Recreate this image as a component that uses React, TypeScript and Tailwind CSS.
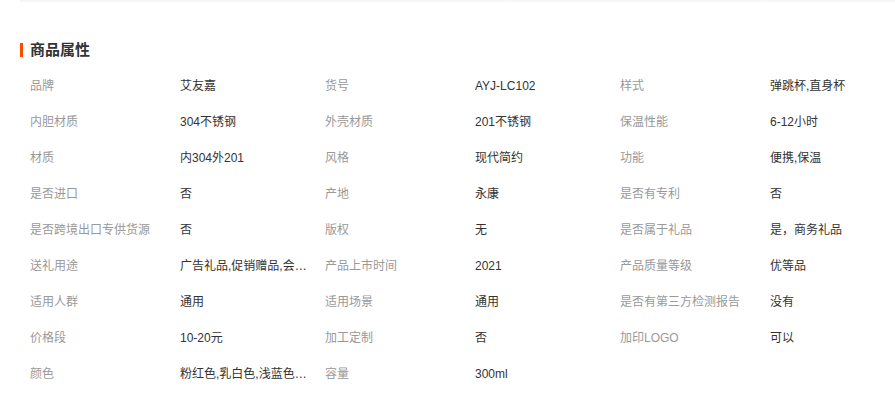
const attrs: [string, string][] = [
  ["品牌", "艾友嘉"],
  ["货号", "AYJ-LC102"],
  ["样式", "弹跳杯,直身杯"],
  ["内胆材质", "304不锈钢"],
  ["外壳材质", "201不锈钢"],
  ["保温性能", "6-12小时"],
  ["材质", "内304外201"],
  ["风格", "现代简约"],
  ["功能", "便携,保温"],
  ["是否进口", "否"],
  ["产地", "永康"],
  ["是否有专利", "否"],
  ["是否跨境出口专供货源", "否"],
  ["版权", "无"],
  ["是否属于礼品", "是，商务礼品"],
  ["送礼用途", "广告礼品,促销赠品,会议礼品"],
  ["产品上市时间", "2021"],
  ["产品质量等级", "优等品"],
  ["适用人群", "通用"],
  ["适用场景", "通用"],
  ["是否有第三方检测报告", "没有"],
  ["价格段", "10-20元"],
  ["加工定制", "否"],
  ["加印LOGO", "可以"],
  ["颜色", "粉红色,乳白色,浅蓝色,黑色"],
  ["容量", "300ml"],
];

export default function App() {
  return (
    <div
      className="w-[895px] h-[399px] bg-white overflow-hidden text-[#333]"
      style={{ fontFamily: '"Liberation Sans", "Noto Sans CJK SC", sans-serif' }}
    >
      {/* shadow of the block above */}
      <div className="ml-[20px] h-[3px] bg-gradient-to-b from-[#f2f3f7] to-white" />

      <div className="pl-[20px] pt-[37px]">
        <div className="flex items-center h-[20px]">
          <span className="w-[3px] h-[14px] bg-[#ff4a00]" />
          <h3 className="ml-[7px] text-[15px] font-bold leading-[20px]">商品属性</h3>
        </div>

        <div className="pl-[10px] pt-[8px] grid grid-cols-[150px_145px_150px_145px_150px_125px]">
          {attrs.map(([label, value]) => (
            <Cell key={label} label={label} value={value} />
          ))}
        </div>
      </div>
    </div>
  );
}

function Cell({ label, value }: { label: string; value: string }) {
  return (
    <>
      <div className="h-[36px] flex items-center text-[12px] text-[#999] whitespace-nowrap">
        {label}
      </div>
      <div className="h-[36px] flex items-center text-[12px] text-[#333] pr-[15px] min-w-0">
        <span className="truncate">{value}</span>
      </div>
    </>
  );
}
